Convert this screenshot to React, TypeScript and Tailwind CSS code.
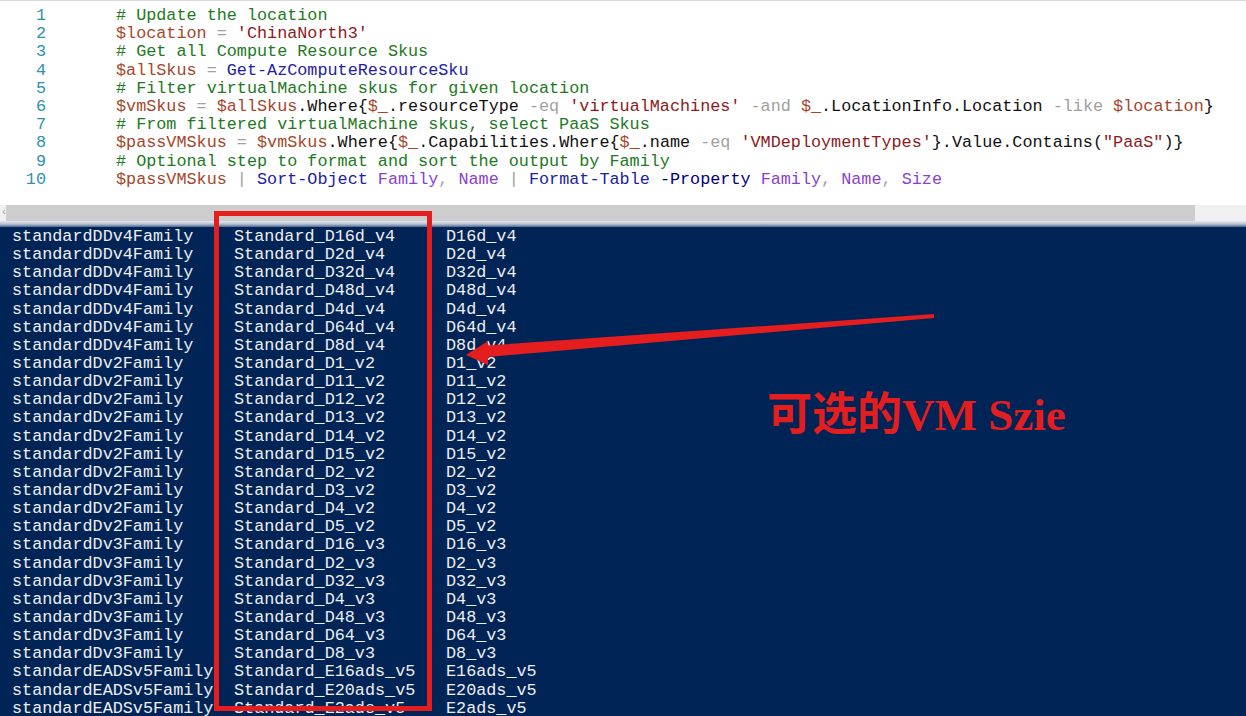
type Tok = [string, string]

const C = {
  cm: 'text-[#217a21]',
  v: 'text-[#a5462a]',
  s: 'text-[#8b1a1a]',
  op: 'text-[#a0a0a0]',
  cmd: 'text-[#2020a8]',
  arg: 'text-[#8a3fd0]',
  p: 'text-[#111111]',
  prm: 'text-[#000080]',
}

const code: Tok[][] = [
  [['# Update the location', C.cm]],
  [['$location', C.v], [' = ', C.op], ["'ChinaNorth3'", C.s]],
  [['# Get all Compute Resource Skus', C.cm]],
  [['$allSkus', C.v], [' = ', C.op], ['Get-AzComputeResourceSku', C.cmd]],
  [['# Filter virtualMachine skus for given location', C.cm]],
  [
    ['$vmSkus', C.v], [' = ', C.op], ['$allSkus', C.v], ['.Where{', C.p], ['$_', C.v],
    ['.resourceType', C.p], [' -eq ', C.op], ["'virtualMachines'", C.s], [' -and ', C.op],
    ['$_', C.v], ['.LocationInfo.Location', C.p], [' -like ', C.op], ['$location', C.v], ['}', C.p],
  ],
  [['# From filtered virtualMachine skus, select PaaS Skus', C.cm]],
  [
    ['$passVMSkus', C.v], [' = ', C.op], ['$vmSkus', C.v], ['.Where{', C.p], ['$_', C.v],
    ['.Capabilities.Where{', C.p], ['$_', C.v], ['.name', C.p], [' -eq ', C.op],
    ["'VMDeploymentTypes'", C.s], ['}.Value.Contains(', C.p], ['"PaaS"', C.s], [')}', C.p],
  ],
  [['# Optional step to format and sort the output by Family', C.cm]],
  [
    ['$passVMSkus', C.v], [' | ', C.op], ['Sort-Object', C.cmd], [' ', C.p], ['Family', C.arg],
    [', ', C.op], ['Name', C.arg], [' | ', C.op], ['Format-Table', C.cmd], [' ', C.p],
    ['-Property', C.prm], [' ', C.p], ['Family', C.arg], [', ', C.op], ['Name', C.arg],
    [', ', C.op], ['Size', C.arg],
  ],
]

const rows: [string, string][] = [
  ['standardDDv4Family', 'D16d_v4'],
  ['standardDDv4Family', 'D2d_v4'],
  ['standardDDv4Family', 'D32d_v4'],
  ['standardDDv4Family', 'D48d_v4'],
  ['standardDDv4Family', 'D4d_v4'],
  ['standardDDv4Family', 'D64d_v4'],
  ['standardDDv4Family', 'D8d_v4'],
  ['standardDv2Family', 'D1_v2'],
  ['standardDv2Family', 'D11_v2'],
  ['standardDv2Family', 'D12_v2'],
  ['standardDv2Family', 'D13_v2'],
  ['standardDv2Family', 'D14_v2'],
  ['standardDv2Family', 'D15_v2'],
  ['standardDv2Family', 'D2_v2'],
  ['standardDv2Family', 'D3_v2'],
  ['standardDv2Family', 'D4_v2'],
  ['standardDv2Family', 'D5_v2'],
  ['standardDv3Family', 'D16_v3'],
  ['standardDv3Family', 'D2_v3'],
  ['standardDv3Family', 'D32_v3'],
  ['standardDv3Family', 'D4_v3'],
  ['standardDv3Family', 'D48_v3'],
  ['standardDv3Family', 'D64_v3'],
  ['standardDv3Family', 'D8_v3'],
  ['standardEADSv5Family', 'E16ads_v5'],
  ['standardEADSv5Family', 'E20ads_v5'],
  ['standardEADSv5Family', 'E2ads_v5'],
]

const mono = { fontFamily: '"Liberation Mono", "DejaVu Sans Mono", monospace' }

export default function App() {
  return (
    <div className="relative w-[1246px] h-[716px] overflow-hidden bg-white text-[16.8px]" style={mono}>
      {/* editor pane */}
      <div className="h-[205px] border-t border-[#d8d8d8] pt-[6px]">
        {code.map((line, i) => (
          <div key={i} className="flex h-[18.2px] leading-[18.2px]">
            <div className="w-[46px] text-right text-[#2b91af]">{i + 1}</div>
            <div className="pl-[70px] whitespace-pre">
              {line.map(([t, c], j) => (
                <span key={j} className={c}>{t}</span>
              ))}
            </div>
          </div>
        ))}
      </div>

      {/* horizontal scrollbar */}
      <div className="flex h-[16px] items-center bg-[#f0f0f0]">
        <span className="w-[6px] text-[10px] leading-none text-[#9a9a9a] pl-[1px]">‹</span>
        <div className="h-full w-[1189px] bg-[#cdcdcd]" />
      </div>
      <div className="h-[6px] bg-gradient-to-b from-[#e6e9ee] via-[#b7c3d4] to-[#4c6790]" />

      {/* console output */}
      <div className="h-[489px] bg-[#012456] pt-[1px] pl-[12px] text-[#eeeef2]">
        {rows.map(([fam, size], i) => (
          <div key={i} className="grid grid-cols-[222px_212px_1fr] h-[18.15px] leading-[18.15px] whitespace-pre">
            <span>{fam}</span>
            <span>{'Standard_' + size}</span>
            <span>{size}</span>
          </div>
        ))}
      </div>

      {/* annotations */}
      <div className="absolute left-[214px] top-[211px] w-[218px] h-[500px] border-[5px] border-[#e41e1e]" />
      <svg className="absolute left-0 top-0" width="1246" height="716" viewBox="0 0 1246 716">
        <polygon
          points="934,314 488,345.5 488,341 466,355 488,365 488,357 934,318"
          fill="#e41e1e"
        />
      </svg>
      <div
        className="absolute left-[767px] top-[386px] text-[45px] leading-[50px] font-bold text-[#e41e1e] whitespace-pre"
        style={{ fontFamily: '"Liberation Serif", "Noto Sans CJK SC", serif' }}
      >
        <span style={{ fontFamily: '"Noto Sans CJK SC", sans-serif' }}>可选的</span>VM Szie
      </div>
    </div>
  )
}
